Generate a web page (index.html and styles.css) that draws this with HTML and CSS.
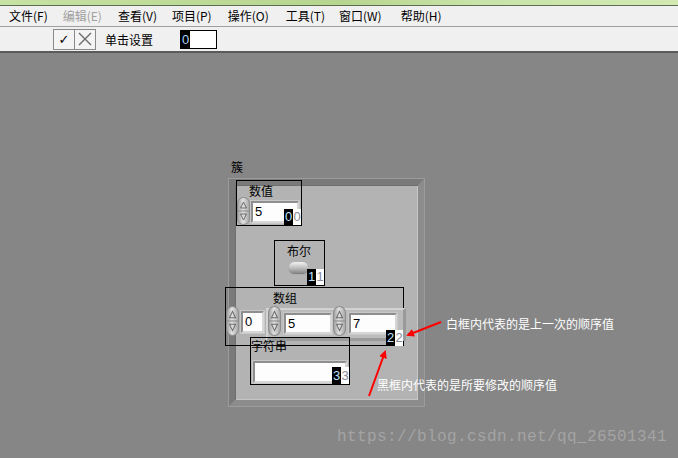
FILE: index.html
```html
<!DOCTYPE html>
<html lang="zh">
  <head>
    <meta charset="UTF-8" />
    <title>簇 - 前面板</title>
    <link rel="stylesheet" href="styles.css">
  </head>
  <body>
    <div class="titlebar"></div>

    <div class="menubar">
      <span>文件(F)</span>
      <span class="disabled">编辑(E)</span>
      <span>查看(V)</span>
      <span>项目(P)</span>
      <span>操作(O)</span>
      <span>工具(T)</span>
      <span>窗口(W)</span>
      <span>帮助(H)</span>
    </div>

    <div class="toolbar">
      <div class="okcancel">
        <span class="ok">✓</span>
        <span class="cancel">
          <svg width="14" height="14" viewBox="0 0 14 14"><path d="M1 1 L13 13 M13 1 L1 13" stroke="#6a6a6a" stroke-width="1.4"/></svg>
        </span>
      </div>
      <span class="tool__label">单击设置</span>
      <div class="order-input">
        <span class="order-input__cur">0</span>
      </div>
    </div>

    <!-- front panel: controls sit where they were placed on the canvas -->
    <div class="panel">
      <span class="cluster__label">簇</span>
      <div class="cluster">

        <div class="ctl ctl--numeric">
          <span class="lbl">数值</span>
          <svg class="spin" width="13" height="28" viewBox="0 0 13 28"><use href="#spinner"/></svg>
          <div class="field field--num">5</div>
          <div class="tag"><b>0</b><i>0</i></div>
        </div>

        <div class="ctl ctl--bool">
          <span class="lbl">布尔</span>
          <div class="toggle"></div>
          <div class="tag"><b>1</b><i>1</i></div>
        </div>

        <div class="ctl ctl--array">
          <span class="lbl">数组</span>
          <svg class="spin spin--idx" width="13" height="30" viewBox="0 0 13 28" preserveAspectRatio="none"><use href="#spinner"/></svg>
          <div class="field field--idx">0</div>
          <div class="array__body">
            <svg class="spin spin--el1" width="13" height="30" viewBox="0 0 13 28" preserveAspectRatio="none"><use href="#spinner"/></svg>
            <div class="field field--el1">5</div>
            <svg class="spin spin--el2" width="13" height="30" viewBox="0 0 13 28" preserveAspectRatio="none"><use href="#spinner"/></svg>
            <div class="field field--el2">7</div>
          </div>
          <div class="tag"><b>2</b><i>2</i></div>
        </div>

        <div class="ctl ctl--string">
          <span class="lbl">字符串</span>
          <div class="field field--str"></div>
          <div class="tag"><b>3</b><i>3</i></div>
        </div>
      </div>

      <svg class="arrows" width="678" height="405" viewBox="0 53 678 405">
        <defs>
          <marker id="head" markerWidth="8" markerHeight="8" refX="6" refY="4" orient="auto" markerUnits="userSpaceOnUse">
            <path d="M0 0 L8 4 L0 8 Z" fill="#f00"/>
          </marker>
        </defs>
        <line x1="441" y1="322" x2="408" y2="335" stroke="#f00" stroke-width="2" marker-end="url(#head)"/>
        <line x1="369" y1="396" x2="385" y2="352" stroke="#f00" stroke-width="2" marker-end="url(#head)"/>
      </svg>

      <span class="note note--white">白框内代表的是上一次的顺序值</span>
      <span class="note note--black">黑框内代表的是所要修改的顺序值</span>
      <span class="watermark">https://blog.csdn.net/qq_26501341</span>
    </div>

    <svg width="0" height="0" class="defs">
      <defs>
        <linearGradient id="spingrad" x1="0" y1="0" x2="1" y2="0">
          <stop offset="0" stop-color="#9c9c9c"/>
          <stop offset="0.45" stop-color="#e2e2e2"/>
          <stop offset="1" stop-color="#a4a4a4"/>
        </linearGradient>
        <g id="spinner">
          <rect x="0.5" y="0.5" width="12" height="27" rx="6" fill="url(#spingrad)" stroke="#8c8c8c"/>
          <line x1="1" y1="14" x2="12" y2="14" stroke="#8c8c8c"/>
          <path d="M6.5 5 L9.5 11 L3.5 11 Z" fill="none" stroke="#6c6c6c"/>
          <path d="M6.5 23 L9.5 17 L3.5 17 Z" fill="none" stroke="#6c6c6c"/>
        </g>
      </defs>
    </svg>
  </body>
</html>
```

FILE: styles.css
```css
body {
  margin: 0;
  width: 678px;
  height: 458px;
  overflow: hidden;
  background-color: #868686;
  font-family: "Noto Sans CJK SC", "Liberation Sans", sans-serif;
  font-size: 12px;
  color: #000;
}

.defs {
  position: absolute;
}

.titlebar {
  height: 5px;
  background: linear-gradient(90deg, #c6e2a4, #b6d58e 50%, #c9e3a8 70%, #d2e9b4);
  border-bottom: 1px solid #5d6d52;
}

.menubar {
  height: 20px;
  display: flex;
  align-items: center;
  padding-left: 9px;
  gap: 16px;
  background-color: #f0f0f0;
  border-bottom: 1px solid #a0a0a0;
  line-height: 14px;
}

.menubar .disabled {
  color: #a0a0a0;
}

.menubar span:nth-child(2) { margin-left: -1px; }
.menubar span:nth-child(4) { margin-left: -1px; }
.menubar span:nth-child(6) { margin-left: 1px; }
.menubar span:nth-child(7) { margin-left: -2px; }
.menubar span:nth-child(8) { margin-left: 3px; }

.toolbar {
  height: 24px;
  display: flex;
  align-items: center;
  background-color: #f0f0f0;
  border-bottom: 2px solid #5a5a5a;
  padding-left: 53px;
}

.okcancel {
  display: flex;
  height: 19px;
  border: 1px solid #8a8a8a;
  background-color: #f4f4f4;
}

.okcancel span {
  width: 20px;
  display: flex;
  align-items: center;
  justify-content: center;
}

.okcancel .ok {
  border-right: 1px solid #8a8a8a;
  font-family: "DejaVu Sans", sans-serif;
  font-size: 13px;
}

.tool__label {
  margin-left: 9px;
}

.order-input {
  margin-left: 27px;
  width: 35px;
  height: 17px;
  border: 1px solid #000;
  background-color: #fff;
  display: flex;
}

.order-input__cur {
  width: 9px;
  background-color: #000;
  color: #a9d4ff;
  font-family: "Liberation Sans", sans-serif;
  font-size: 13px;
  line-height: 17px;
  text-align: center;
}

/* panel canvas */
.panel {
  position: relative;
  height: 405px;
}

.cluster__label {
  position: absolute;
  left: 231px;
  top: 107px;
  line-height: 14px;
}

.cluster {
  position: absolute;
  left: 229px;
  top: 126px;
  width: 183px;
  height: 215px;
  background-color: #b3b3b3;
  border-style: solid;
  border-width: 6px;
  border-color: #7a7a7a #8c8c8c #8c8c8c #7a7a7a;
  box-shadow: inset 1px 1px 0 #6e6e6e, inset -1px -1px 0 #c6c6c6, 0 0 0 1px #9c9c9c;
}

.ctl {
  position: absolute;
  border: 1px solid #000;
  box-sizing: border-box;
}

.ctl .lbl {
  position: absolute;
  line-height: 14px;
}

.spin {
  position: absolute;
}

.field {
  position: absolute;
  box-sizing: border-box;
  background-color: #fdfdfd;
  border-top: 2px solid #8e8e8e;
  border-left: 2px solid #8e8e8e;
  border-right: 2px solid #d6d6d6;
  border-bottom: 2px solid #d6d6d6;
  box-shadow: 0 0 0 1px #c8c8c8;
  font-family: "Liberation Sans", sans-serif;
  font-size: 13px;
  line-height: 17px;
  padding-left: 2px;
}

.tag {
  position: absolute;
  display: flex;
  height: 16px;
  font-family: "Liberation Sans", sans-serif;
  font-size: 13px;
  line-height: 16px;
}

.tag b {
  font-weight: normal;
  width: 9px;
  background-color: #000;
  color: #bfe2ff;
  text-align: center;
}

.tag i {
  font-style: normal;
  width: 8px;
  background-color: #fff;
  color: #8a8a96;
  text-align: center;
}

/* 数值 */
.ctl--numeric {
  left: 1px;
  top: -5px;
  width: 66px;
  height: 46px;
}

.ctl--numeric .lbl { left: 12px; top: 3px; }
.ctl--numeric .spin { left: 0; top: 16px; }
.ctl--numeric .field { left: 14px; top: 20px; width: 48px; height: 22px; }
.ctl--numeric .tag { right: 0; bottom: 0; }

/* 布尔 */
.ctl--bool {
  left: 39px;
  top: 55px;
  width: 51px;
  height: 46px;
}

.ctl--bool .lbl { left: 12px; top: 3px; }

.toggle {
  position: absolute;
  left: 14px;
  top: 21px;
  width: 19px;
  height: 11px;
  border-radius: 6px;
  background: linear-gradient(180deg, #f2f2f2, #bdbdbd 55%, #8a8a8a);
  box-shadow: 0 1px 1px #7a7a7a;
}

.ctl--bool .tag { right: 0; bottom: 0; }

/* 数组 */
.ctl--array {
  left: -10px;
  top: 102px;
  width: 179px;
  height: 59px;
}

.ctl--array .lbl { left: 47px; top: 3px; }
.spin--idx { left: 0; top: 18px; }
.field--idx { left: 15px; top: 23px; width: 23px; height: 22px; }

.array__body {
  position: absolute;
  left: 40px;
  top: 20px;
  width: 140px;
  height: 33px;
  box-sizing: border-box;
  background-color: #bcbcbc;
  border-top: 2px solid #d2d2d2;
  border-left: 2px solid #d2d2d2;
  border-right: 3px solid #9a9a9a;
  border-bottom: 3px solid #9a9a9a;
}

.spin--el1 { left: 0; top: -4px; }
.field--el1 { left: 16px; top: 3px; width: 48px; height: 21px; }
.spin--el2 { left: 65px; top: -4px; }
.field--el2 { left: 81px; top: 3px; width: 48px; height: 21px; }

.ctl--array .tag { right: 0; bottom: -1px; }

/* 字符串 */
.ctl--string {
  left: 15px;
  top: 152px;
  width: 100px;
  height: 48px;
}

.ctl--string .lbl { left: 0; top: 1px; }
.field--str { left: 2px; top: 23px; width: 94px; height: 22px; }
.ctl--string .tag { right: 0; bottom: 0; height: 17px; line-height: 17px; }

/* annotations */
.arrows {
  position: absolute;
  left: 0;
  top: 0;
}

.note {
  position: absolute;
  color: #fff;
  line-height: 14px;
}

.note--white {
  left: 446px;
  top: 264px;
}

.note--black {
  left: 377px;
  top: 325px;
}

.watermark {
  position: absolute;
  left: 337px;
  top: 375px;
  font-family: "Liberation Mono", monospace;
  font-size: 16px;
  letter-spacing: 0.4px;
  color: #a4a4a4;
}
```
